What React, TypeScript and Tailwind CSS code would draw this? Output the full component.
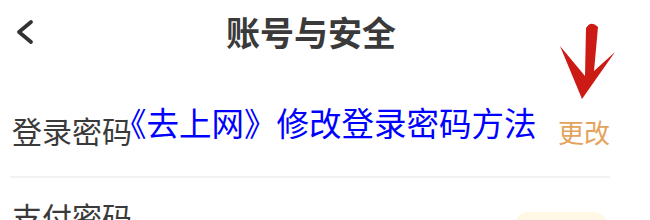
import React from "react";

export default function App() {
  return (
    <div
      className="relative w-[650px] h-[220px] overflow-hidden bg-white"
      style={{ fontFamily: '"Noto Sans CJK SC", "Noto Sans", sans-serif' }}
    >
      <header className="flex items-center h-[64px] pl-[15px]">
        <svg width="20" height="28" viewBox="0 0 20 28" className="shrink-0">
          <path d="M16 4 L4 14 L16 24" fill="none" stroke="#333" strokeWidth="3.8" strokeLinecap="round" strokeLinejoin="round" />
        </svg>
        <h1 className="ml-[191px] text-[34px] leading-none font-bold text-[#3a3a3a]">账号与安全</h1>
      </header>

      <div className="ml-[10px] mr-[40px]">
        <div className="flex items-baseline justify-between pt-[51px] h-[114px] border-b-2 border-[#f2f2f2]">
          <span className="pl-[2px] text-[30px] leading-none text-[#3a3a3a]">登录密码</span>
          <span className="text-[26px] leading-none text-[#e3a35c]">更改</span>
        </div>
        <div className="flex items-start justify-between pt-[23px]">
          <span className="pl-[2px] text-[30px] leading-none text-[#3a3a3a]">支付密码</span>
          <span className="mt-[11px] mr-[2px] w-[94px] h-[30px] rounded-full bg-[#fff8e4]" />
        </div>
      </div>

      <svg className="absolute left-0 top-0" width="650" height="220" viewBox="0 0 650 220">
        <path
          d="M586 28 Q591 20 598 27 L594 71 L615 52 L582 99 L560 46 L585 76 Z"
          fill="#cc1a14"
        />
      </svg>

      <div className="absolute left-[114px] top-[106px] text-[32.5px] leading-none text-[#0000ff] whitespace-nowrap">
        《去上网》修改登录密码方法
      </div>
    </div>
  );
}
